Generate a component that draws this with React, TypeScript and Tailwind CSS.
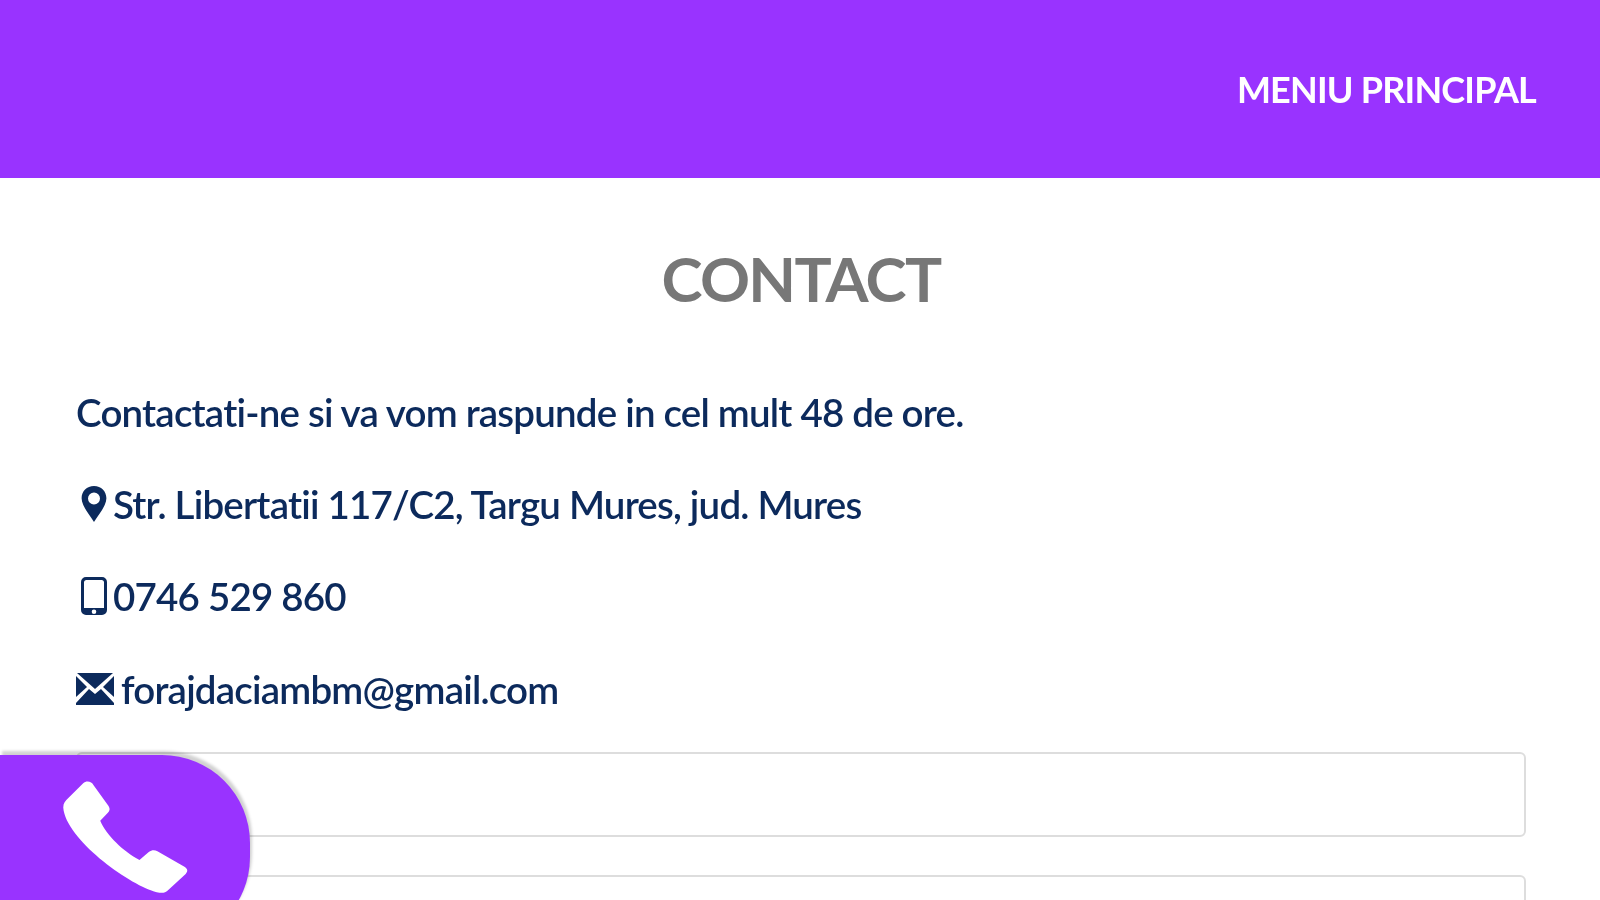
import React from 'react';

const PinIcon = () => (
    <svg viewBox="0 0 26 36" className="w-[26px] h-[36px] shrink-0" fill="currentColor">
        <path fillRule="evenodd" d="M13 0C5.800 0 .6 5.400.6 12.200.6 19.600 8.600 29 13 36c4.400-7 12.400-16.400 12.400-23.800C25.400 5.400 20.200 0 13 0zm0 6.500a6 6 0 1 1 0 12 6 6 0 0 1 0-12z" />
    </svg>
);

const MobileIcon = () => (
    <svg viewBox="0 0 26 38" className="w-[26px] h-[38px] shrink-0" fill="currentColor">
        <path fillRule="evenodd" d="M5 0h16a5 5 0 0 1 5 5v28a5 5 0 0 1-5 5H5a5 5 0 0 1-5-5V5a5 5 0 0 1 5-5zm.5 3A2.500 2.500 0 0 0 3 5.500V31h20V5.500A2.500 2.500 0 0 0 20.500 3zM13 32.500a2.300 2.300 0 1 0 0 4.600 2.300 2.300 0 0 0 0-4.600z" />
    </svg>
);

const MailIcon = () => (
    <svg viewBox="0 0 38 32" className="w-[38px] h-[32px] shrink-0" fill="currentColor">
        <path d="M1 0h36L19 16z" />
        <path d="M0 3l11 11L0 24z" />
        <path d="M38 3L27 14l11 10z" />
        <path d="M13 16l6 5 6-5 13 14v2H0v-2z" />
    </svg>
);

const Field = () => (
    <div className="h-[85px] w-full shrink-0 rounded-[6px] border-2 border-[#dddddd] bg-white" />
);

export default function App() {
    return (
        <div className="relative h-[900px] w-full overflow-hidden bg-white font-['Lato',sans-serif] text-[#0c2a5c]">
            <div className="blur-[0.5px]">
                <header className="flex h-[178px] items-start justify-end bg-[#9933ff] pr-[64px] pt-[66px]">
                    <span className="text-[36px] font-bold leading-[46px] tracking-[-0.8px] text-white">MENIU PRINCIPAL</span>
                </header>

                <main className="pl-[76px] pr-[74px]">
                    <h1 className="mt-[63px] text-center text-[62px] font-bold leading-[74px] tracking-[-1.7px] text-[#777777]">CONTACT</h1>

                    <div className="mt-[74px] space-y-[46px] text-[38.500px] font-semibold leading-[46px] tracking-[-0.8px]">
                        <p>Contactati-ne si va vom raspunde in cel mult 48 de ore.</p>
                        <p className="flex items-center">
                            <span className="ml-[5px] mr-[6px] flex"><PinIcon /></span>
                            Str. Libertatii 117/C2, Targu Mures, jud. Mures
                        </p>
                        <p className="flex items-center">
                            <span className="ml-[5px] mr-[6px] flex"><MobileIcon /></span>
                            0746 529 860
                        </p>
                        <p className="flex items-center pt-px">
                            <span className="mr-[7px] flex"><MailIcon /></span>
                            forajdaciambm@gmail.com
                        </p>
                    </div>

                    <div className="mt-[40px] flex flex-col gap-[38px]">
                        <Field />
                        <Field />
                    </div>
                </main>
            </div>

            {/* floating call button */}
            <div className="absolute left-0 top-[755px] h-[190px] w-[250px] rounded-r-[88px] bg-[#9933ff] shadow-[2px_-4px_3px_rgba(0,0,0,0.18)] blur-[0.5px]">
                <svg viewBox="185 180 385 345" className="ml-[62px] mt-[25px] h-[115px] w-[128px]" fill="white">
                    <path d="M262 184C270 184 276 188 280 195L325 258C330 266 329 272 323 278L300 302C318 345 370 395 418 420L446 396C455 390 463 389 472 394L552 440C563 447 565 453 557 462L503 512C495 520 485 520 470 517C395 498 210 370 190 272C187 258 190 248 198 240L248 190C253 186 257 184 262 184Z" />
                </svg>
            </div>
        </div>
    );
}
